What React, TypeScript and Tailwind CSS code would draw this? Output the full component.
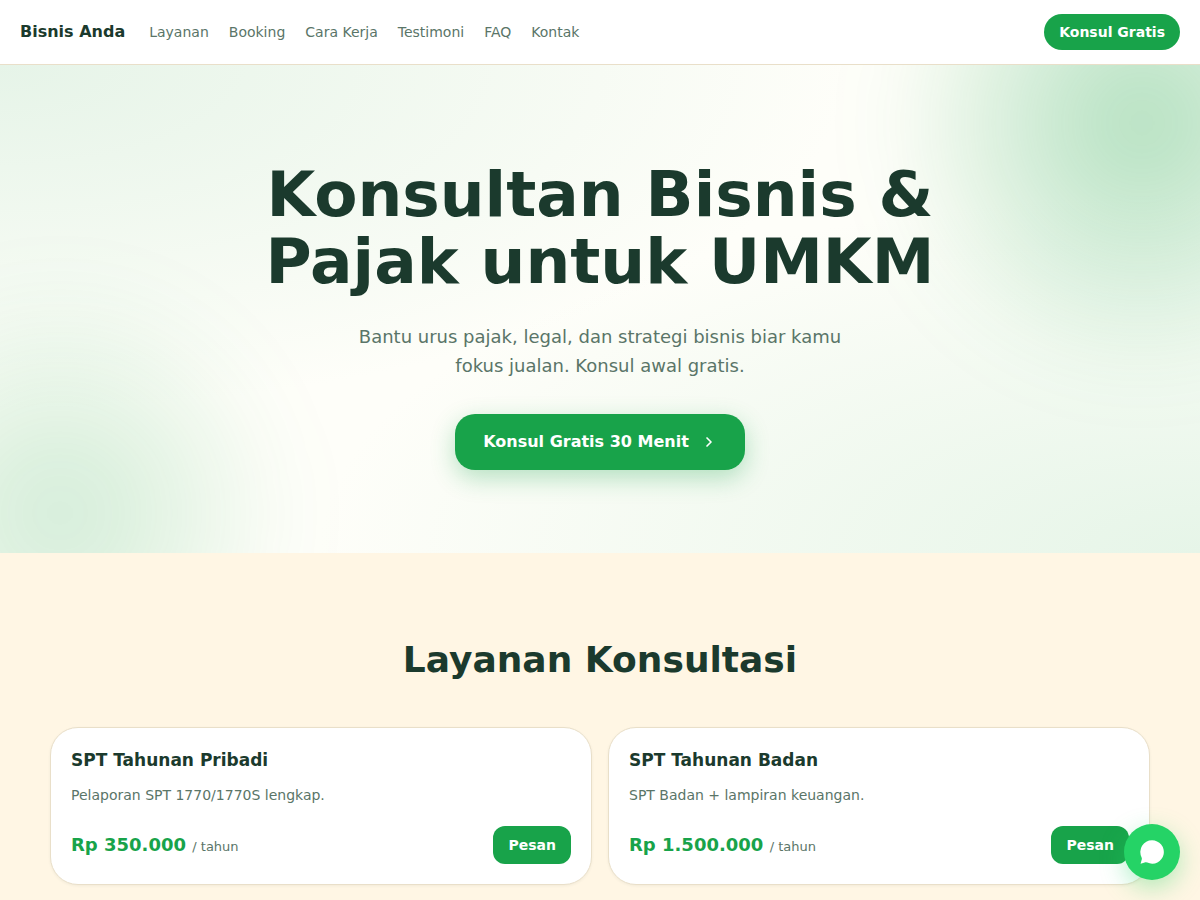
import { ChevronRight } from "lucide-react";

const links = [
  { label: "Layanan", href: "#layanan" },
  { label: "Booking", href: "#booking" },
  { label: "Cara Kerja", href: "#cara-kerja" },
  { label: "Testimoni", href: "#testimoni" },
  { label: "FAQ", href: "#faq" },
  { label: "Kontak", href: "#kontak" },
];

const services = [
  { title: "SPT Tahunan Pribadi", text: "Pelaporan SPT 1770/1770S lengkap.", price: "Rp 350.000" },
  { title: "SPT Tahunan Badan", text: "SPT Badan + lampiran keuangan.", price: "Rp 1.500.000" },
];

function Header() {
  return (
    <header className="flex h-[65px] items-center justify-between border-b border-[#e9dfc9] bg-white px-5">
      <div className="flex items-center gap-6">
        <a href="#" className="text-base font-bold">Bisnis Anda</a>
        <nav className="flex items-center gap-5 text-sm text-[#5a7568]">
          {links.map((l) => (
            <a key={l.href} href={l.href}>{l.label}</a>
          ))}
        </nav>
      </div>
      <a href="#booking" className="rounded-full bg-[#18a34a] px-[15px] py-2 text-sm font-bold text-white">
        Konsul Gratis
      </a>
    </header>
  );
}

function Hero() {
  return (
    <section className="relative overflow-hidden bg-[#fefef9] bg-[radial-gradient(ellipse_at_top_left,#e6f4e8,rgba(230,244,232,0)_50%),radial-gradient(ellipse_at_bottom_right,#e6f5e8,rgba(230,245,232,0)_52%)] px-5 pt-24 pb-[83px]">
      <div className="absolute -top-[202px] -right-[202px] size-[520px] rounded-full bg-[radial-gradient(circle,rgba(24,163,74,0.34),rgba(24,163,74,0)_70%)] blur-2xl" />
      <div className="absolute -bottom-[200px] -left-[180px] size-[480px] rounded-full bg-[radial-gradient(circle,rgba(24,163,74,0.2),rgba(24,163,74,0)_70%)] blur-2xl" />
      <div className="relative mx-auto flex max-w-3xl flex-col items-center text-center">
        <h1 className="text-[63px] leading-[67px] font-bold">Konsultan Bisnis &amp; Pajak untuk UMKM</h1>
        <p className="mt-[27px] max-w-[520px] text-lg leading-[29px] text-[#5a7568]">
          Bantu urus pajak, legal, dan strategi bisnis biar kamu fokus jualan. Konsul awal gratis.
        </p>
        <a
          href="#booking"
          className="mt-[34px] flex h-14 items-center gap-3 rounded-[20px] bg-[#18a34a] px-7 text-base font-bold text-white shadow-[0_8px_24px_rgba(24,163,74,0.3)]"
        >
          Konsul Gratis 30 Menit
          <ChevronRight className="size-4" strokeWidth={2.5} />
        </a>
      </div>
    </section>
  );
}

function Services() {
  return (
    <section id="layanan" className="px-5 py-20">
      <h2 className="text-center text-4xl leading-[54px] font-bold">Layanan Konsultasi</h2>
      <div className="mx-auto mt-10 grid max-w-[1100px] grid-cols-2 gap-4">
        {services.map((s) => (
          <article key={s.title} className="rounded-[28px] border border-[#e9dfc9] bg-white p-5 shadow-[0_1px_3px_rgba(27,58,45,0.06)]">
            <h3 className="text-[17px] leading-6 font-bold">{s.title}</h3>
            <p className="mt-[11px] text-sm leading-6 text-[#5a7568]">{s.text}</p>
            <div className="mt-[19px] flex items-center justify-between">
              <p className="text-lg font-bold text-[#18a34a]">
                {s.price} <span className="text-[13px] font-normal text-[#5a7568]">/ tahun</span>
              </p>
              <button type="button" className="h-[38px] rounded-xl bg-[#18a34a] px-[15px] text-sm font-bold text-white">
                Pesan
              </button>
            </div>
          </article>
        ))}
      </div>
    </section>
  );
}

export default function App() {
  return (
    <div className="min-h-screen bg-[#fff6e4] font-['DejaVu_Sans',sans-serif] text-[#1b3a2d]">
      <Header />
      <main>
        <Hero />
        <Services />
      </main>
      <a
        href="#kontak"
        aria-label="Chat"
        className="fixed right-5 bottom-5 flex size-14 items-center justify-center rounded-full bg-[#25d366] text-white shadow-[0_8px_24px_rgba(37,211,102,0.35)]"
      >
        <svg viewBox="0 0 24 24" className="size-7" fill="currentColor" aria-hidden="true">
          <path d="M12 2A10 10 0 0 0 3 16.400Q3.500 17.500 3.200 18.500L2.200 22.100 6.400 20.800Q7.200 20.600 8 21.100A10 10 0 1 0 12 2z" />
        </svg>
      </a>
    </div>
  );
}
